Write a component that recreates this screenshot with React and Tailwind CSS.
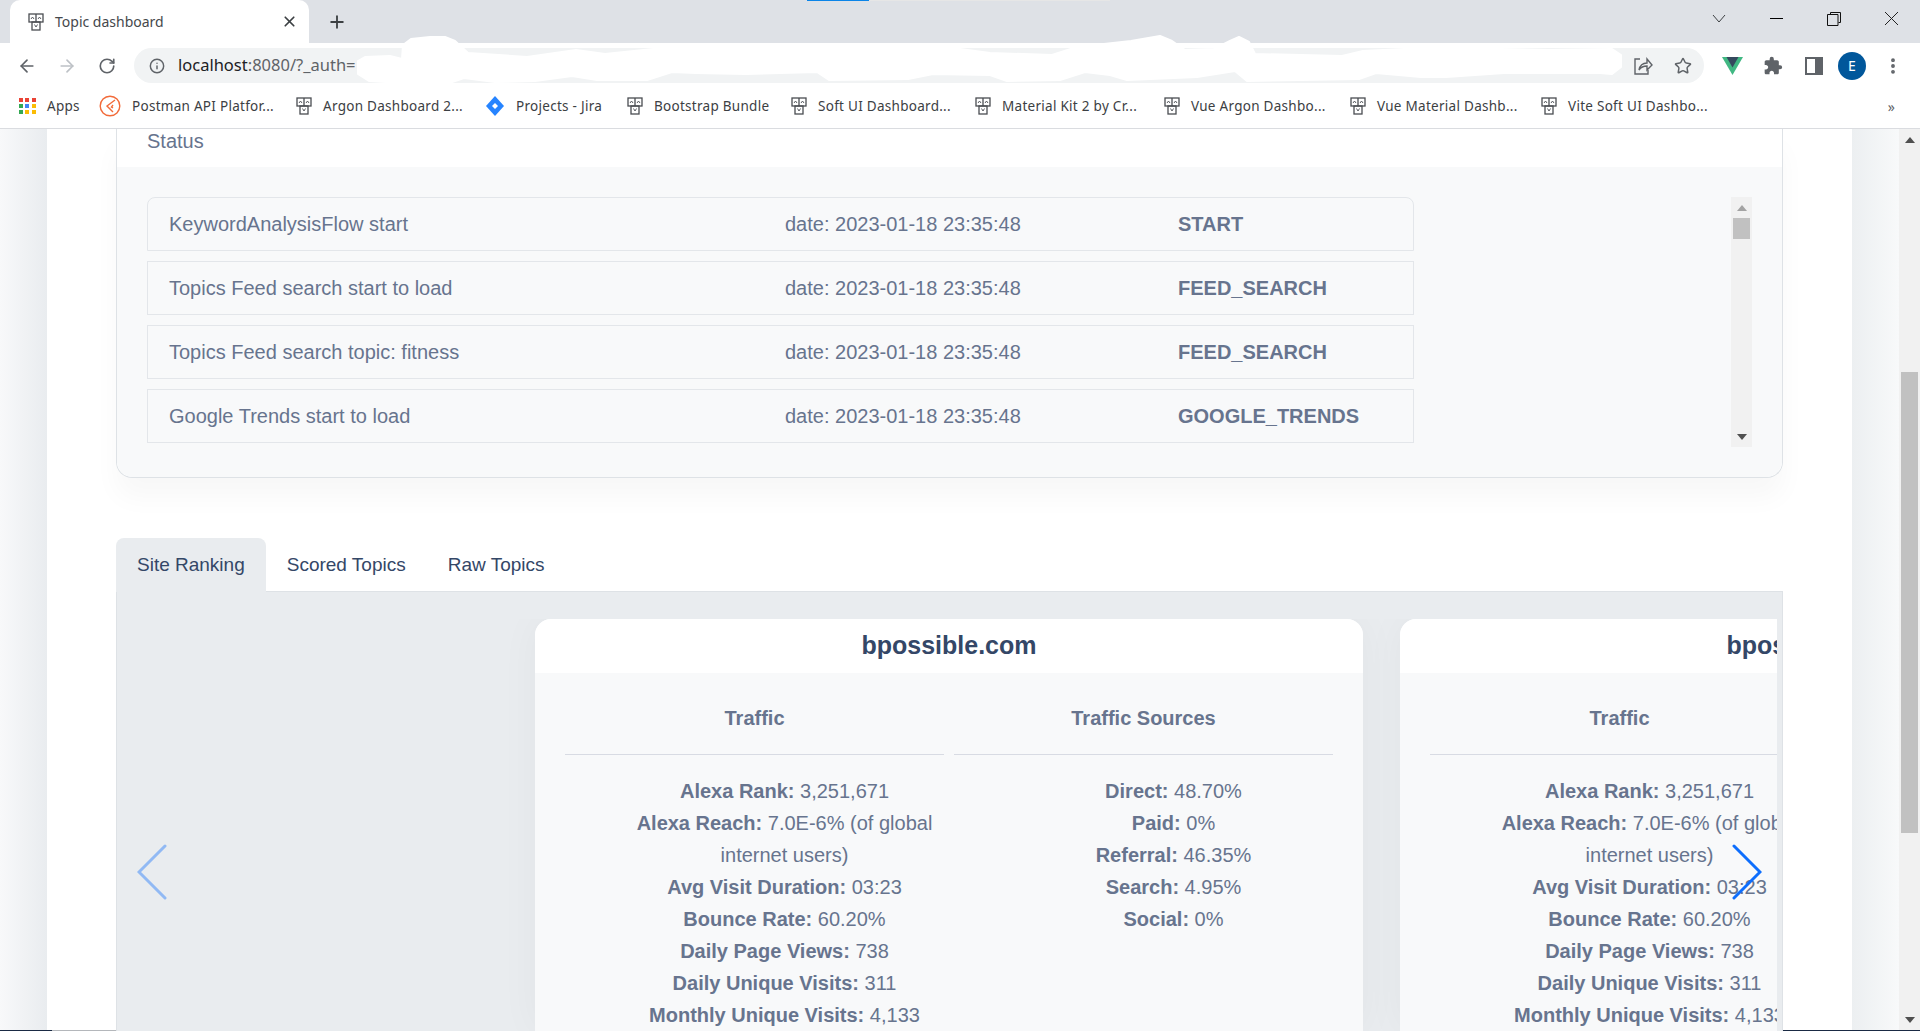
import { ArrowLeft, ArrowRight, RotateCw, Info, Star, X, Plus, EllipsisVertical } from 'lucide-react'
import { MdExtension } from 'react-icons/md'

const statusRows = [
  { text: 'KeywordAnalysisFlow start', tag: 'START', rounded: 'rounded-t-lg' },
  { text: 'Topics Feed search start to load', tag: 'FEED_SEARCH', rounded: '' },
  { text: 'Topics Feed search topic: fitness', tag: 'FEED_SEARCH', rounded: '' },
  { text: 'Google Trends start to load', tag: 'GOOGLE_TRENDS', rounded: '' },
]

const traffic = [
  ['Alexa Rank:', '3,251,671'],
  ['Alexa Reach:', '7.0E-6% (of global internet users)'],
  ['Avg Visit Duration:', '03:23'],
  ['Bounce Rate:', '60.20%'],
  ['Daily Page Views:', '738'],
  ['Daily Unique Visits:', '311'],
  ['Monthly Unique Visits:', '4,133'],
]

const sources = [
  ['Direct:', '48.70%'],
  ['Paid:', '0%'],
  ['Referral:', '46.35%'],
  ['Search:', '4.95%'],
  ['Social:', '0%'],
]

const bookmarks = [
  { label: 'Apps', icon: 'apps', width: 'w-[80px]' },
  { label: 'Postman API Platfor...', icon: 'postman', width: 'w-[197px]' },
  { label: 'Argon Dashboard 2...', icon: 'fav', width: 'w-[189px]' },
  { label: 'Projects - Jira', icon: 'jira', width: 'w-[142px]' },
  { label: 'Bootstrap Bundle', icon: 'fav', width: 'w-[164px]' },
  { label: 'Soft UI Dashboard...', icon: 'fav', width: 'w-[184px]' },
  { label: 'Material Kit 2 by Cr...', icon: 'fav', width: 'w-[189px]' },
  { label: 'Vue Argon Dashbo...', icon: 'fav', width: 'w-[186px]' },
  { label: 'Vue Material Dashb...', icon: 'fav', width: 'w-[191px]' },
  { label: 'Vite Soft UI Dashbo...', icon: 'fav', width: 'w-[170px]' },
]

function Favicon() {
  return (
    <svg width="16" height="18" viewBox="0 0 16 18" fill="none" stroke="#4a4d52" strokeWidth="1.3" className="shrink-0">
      <rect x="1" y="1" width="14" height="8" />
      <path d="M8 1v8" />
      <rect x="4" y="9" width="8" height="8" />
      <path d="M3 6l1.5-2L6 6M10 6l1.5-2L13 6M6.5 11.5L8 14l1.500-2.500" strokeWidth="0.9" />
    </svg>
  )
}

function AppsIcon() {
  const colors = ['bg-[#ea4335]', 'bg-[#ea4335]', 'bg-[#ea4335]', 'bg-[#34a853]', 'bg-[#4285f4]', 'bg-[#fbbc04]', 'bg-[#34a853]', 'bg-[#fbbc04]', 'bg-[#fbbc04]']
  return (
    <div className="grid grid-cols-3 gap-[2px] w-[17px] shrink-0">
      {colors.map((c, i) => (
        <span key={i} className={`h-[4px] w-[4px] ${c}`} />
      ))}
    </div>
  )
}

function PostmanIcon() {
  return (
    <svg width="22" height="22" viewBox="0 0 22 22" fill="none" stroke="#f26b3a" strokeWidth="1.4" className="shrink-0">
      <circle cx="11" cy="11" r="9.800" />
      <path d="M16 5l-8 6 6 6M14 10l-1.500 2 1.500 1" />
    </svg>
  )
}

function JiraIcon() {
  return (
    <svg width="20" height="22" viewBox="0 0 20 22" className="shrink-0">
      <path d="M10 1l9 10-9 10-9-10z" fill="#2684ff" />
      <path d="M10 8l3 3-3 3-3-3z" fill="#fff" />
    </svg>
  )
}

function BookmarkIcon({ type }) {
  if (type === 'apps') return <AppsIcon />
  if (type === 'postman') return <PostmanIcon />
  if (type === 'jira') return <JiraIcon />
  return <Favicon />
}

function TriangleUp({ color }) {
  return (
    <svg width="10" height="6" viewBox="0 0 10 6">
      <path d="M5 0l5 6H0z" fill={color} />
    </svg>
  )
}

function TriangleDown({ color }) {
  return (
    <svg width="10" height="6" viewBox="0 0 10 6">
      <path d="M0 0h10L5 6z" fill={color} />
    </svg>
  )
}

function TabStrip() {
  return (
    <div className="relative flex h-[43px] items-end bg-[#dee1e6] pl-[10px]">
      <div className="relative flex h-[43px] w-[299px] items-center rounded-t-[10px] bg-white pl-[18px] pr-[11px]">
        <Favicon />
        <span className="ml-[11px] flex-1 text-[14px] text-[#45484c]">Topic dashboard</span>
        <X size={17} strokeWidth={2.4} className="text-[#3c4043]" />
      </div>
      <Plus size={20} strokeWidth={2.2} className="ml-[18px] mb-[11px] text-[#3c4043]" />
      {/* page loading strip along the top edge */}
      <div className="absolute left-[807px] top-0 h-[1px] w-[62px] bg-[#0a84e8]" />
      <div className="absolute left-[869px] top-0 h-[1px] w-[241px] bg-[#e6e6e6]" />
      <svg width="16" height="10" viewBox="0 0 16 10" fill="none" stroke="#3c4043" className="absolute left-[1711px] top-[14px]">
        <path d="M2 1l6 7 6-7" />
      </svg>
      <div className="absolute left-[1770px] top-[18px] h-[1px] w-[13px] bg-black" />
      <svg width="14" height="14" viewBox="0 0 14 14" fill="none" stroke="#111" className="absolute left-[1827px] top-[12px]">
        <path d="M3.500 2.500V.5h10v10h-2M.5 2.500h10.500v11H.5z" />
      </svg>
      <svg width="15" height="15" viewBox="0 0 15 15" fill="none" stroke="#222" className="absolute left-[1884px] top-[11px]">
        <path d="M1 1l13 13M14 1L1 14" />
      </svg>
    </div>
  )
}

function Toolbar() {
  return (
    <div className="relative flex h-[42px] items-center bg-white pl-[17px] pt-[3px]">
      <ArrowLeft size={20} strokeWidth={2} className="text-[#5f6368]" />
      <ArrowRight size={20} strokeWidth={2} className="ml-[20px] text-[#bdc1c6]" />
      <RotateCw size={18} strokeWidth={2.2} className="ml-[21px] text-[#5f6368]" />
      <div className="ml-[18px] flex h-[35px] w-[1570px] items-center rounded-full bg-[#f1f3f4] pl-[15px]">
        <Info size={16} strokeWidth={2.2} className="text-[#5f6368]" />
        <span className="ml-[13px] text-[16.500px] text-[#202124]">
          localhost<span className="text-[#5f6368]">:8080/?_auth=</span>
        </span>
        <div className="ml-auto mr-[12px] flex items-center gap-[21px]">
          <svg width="20" height="20" viewBox="0 0 20 20" fill="none" stroke="#5f6368" strokeWidth="1.400">
            <path d="M7 3H2v15h13v-4" />
            <path d="M6 14c1-5 4-7 8-7V3l5 6-5 5v-4c-3 0-6 1-8 4z" />
          </svg>
          <Star size={18} strokeWidth={2} className="text-[#5f6368]" />
        </div>
      </div>
      <svg width="21" height="18" viewBox="0 0 21 18" className="ml-[18px]">
        <path d="M0 0h21L10.500 18z" fill="#41b883" />
        <path d="M4.500 0h12L10.500 10.500z" fill="#35495e" />
      </svg>
      <MdExtension size={20} className="ml-[20px] text-[#5f6368]" />
      <div className="ml-[22px] flex h-[18px] w-[18px] border-2 border-[#5f6368] bg-white">
        <span className="ml-auto h-full w-[6px] bg-[#5f6368]" />
      </div>
      <div className="ml-[15px] flex h-[28px] w-[28px] items-center justify-center rounded-full bg-[#01579b] text-[14px] text-white">E</div>
      <EllipsisVertical size={20} strokeWidth={2.6} className="ml-[17px] text-[#5f6368]" />
      {/* redacted part of the address, hand-painted white in the screenshot */}
      <svg width="1920" height="85" viewBox="0 -42 1920 85" className="absolute left-0 top-[-43px] pointer-events-none">
        <g transform="translate(0 -43)">
          <path
            fill="#fff"
            stroke="#fff"
            strokeLinejoin="round"
            strokeWidth="2"
            d="M358 75L358 62 365 58 390 57 402 60 403 46 411 40 430 38 445 38 455 42 468 54 527 58 576 51 605 55 663 49 738 50 813 48 920 48 960 50 990 54 1052 56 1077 48 1131 42 1160 37 1172 42 1185 51 1214 50 1230 42 1239 38 1249 43 1255 55 1342 57 1363 52 1405 50 1446 49 1550 51 1612 50 1621 56 1621 68 1612 75 1600 74 1504 74 1446 78 1421 78 1376 74 1359 80 1247 82 1235 72 1197 78 1127 81 1110 76 1085 73 1060 81 1007 82 990 76 933 75 908 80 829 81 817 73 746 75 696 74 672 73 647 81 597 81 572 77 535 82 495 83 464 79 452 83 386 83 369 82z"
          />
        </g>
      </svg>
    </div>
  )
}

function BookmarksBar() {
  return (
    <div className="flex h-[44px] items-center border-b border-[#dadce0] bg-white pl-[19px] pb-[1px]">
      {bookmarks.map((b) => (
        <div key={b.label} className={`flex items-center gap-[11px] ${b.width} shrink-0`}>
          <BookmarkIcon type={b.icon} />
          <span className="whitespace-nowrap text-[13.500px] tracking-[0.28px] text-[#3c4043]">{b.label}</span>
        </div>
      ))}
      <span className="ml-auto mr-[25px] text-[14px] text-[#5f6368]">»</span>
    </div>
  )
}

function StatusCard() {
  return (
    <div className="rounded-b-2xl border-x border-b border-[#dee2e6] shadow-[0_20px_27px_rgba(0,0,0,0.03)]">
      <div className="h-[38px] bg-white pl-[30px] text-[20px] leading-[24px] text-[#67748e]">Status</div>
      <div className="flex h-[310px] justify-between rounded-b-2xl bg-[#f8f9fa] px-[30px] pt-[30px]">
        <div className="h-[250px] w-[1267px] overflow-hidden">
          {statusRows.map((row) => (
            <div
              key={row.text}
              className={`mb-[10px] flex h-[54px] items-center border border-[#e3e6ea] pl-[21px] text-[20px] text-[#67748e] ${row.rounded}`}
            >
              <span className="w-[616px]">{row.text}</span>
              <span className="w-[393px]">date: 2023-01-18 23:35:48</span>
              <span className="font-bold">{row.tag}</span>
            </div>
          ))}
        </div>
        <div className="flex h-[250px] w-[21px] flex-col items-center bg-[#f1f1f1]">
          <div className="flex h-[21px] items-center justify-center">
            <TriangleUp color="#a3a3a3" />
          </div>
          <div className="h-[21px] w-[17px] bg-[#c1c1c1]" />
          <div className="mt-auto flex h-[21px] items-center justify-center">
            <TriangleDown color="#505050" />
          </div>
        </div>
      </div>
    </div>
  )
}

function InfoLine({ label, value }) {
  return (
    <li>
      <b className="font-bold">{label}</b> {value}
    </li>
  )
}

function SiteCard() {
  return (
    <div className="w-[828px] shrink-0 rounded-t-2xl bg-[#f8f9fa] shadow-[0_0_40px_rgba(0,0,0,0.04)]">
      <div className="flex h-[54px] items-center justify-center rounded-t-2xl bg-white text-[25px] font-bold text-[#344767]">
        bpossible.com
      </div>
      <div className="grid grid-cols-2 gap-[10px] px-[30px] pt-[30px] text-[20px] leading-[32px] text-[#67748e]">
        <div>
          <h5 className="border-b border-[#d8dbe3] pb-[21px] text-center text-[20px] leading-[30px] font-bold">Traffic</h5>
          <ul className="pl-[60px] pt-[20px] text-center">
            {traffic.map(([label, value]) => (
              <InfoLine key={label} label={label} value={value} />
            ))}
          </ul>
        </div>
        <div>
          <h5 className="border-b border-[#d8dbe3] pb-[21px] text-center text-[20px] leading-[30px] font-bold">Traffic Sources</h5>
          <ul className="pl-[60px] pt-[20px] text-center">
            {sources.map(([label, value]) => (
              <InfoLine key={label} label={label} value={value} />
            ))}
          </ul>
        </div>
      </div>
    </div>
  )
}

function RankingTabs() {
  return (
    <div className="mt-[60px]">
      <div className="flex h-[54px] border-b border-[#dee2e6] text-[19px] text-[#344767]">
        <div className="flex h-[54px] items-center rounded-t-lg bg-[#e9ecef] px-[21px]">Site Ranking</div>
        <div className="flex h-[54px] items-center px-[21px]">Scored Topics</div>
        <div className="flex h-[54px] items-center px-[21px]">Raw Topics</div>
      </div>
      <div className="relative h-[600px] border-x border-[#dee2e6] bg-[#e9ecef] pr-[5px] pt-[27px]">
        <div className="flex gap-[37px] overflow-hidden pl-[418px]">
          <SiteCard />
          <SiteCard />
        </div>
        <svg width="30" height="56" viewBox="0 0 30 56" fill="none" stroke="#0d6efd" strokeOpacity="0.4" strokeWidth="3" strokeLinecap="round" className="absolute left-[20px] top-[252px]">
          <path d="M28 2L2 28l26 26" />
        </svg>
        <svg width="30" height="56" viewBox="0 0 30 56" fill="none" stroke="#0d6efd" strokeWidth="3" strokeLinecap="round" className="absolute right-[20px] top-[252px]">
          <path d="M2 2l26 26L2 54" />
        </svg>
      </div>
    </div>
  )
}

export default function App() {
  return (
    <div className="flex h-[1031px] w-[1920px] flex-col overflow-hidden bg-white font-['Liberation_Sans',Arial,sans-serif]">
      <div className="font-['Noto_Sans',sans-serif]">
        <TabStrip />
        <Toolbar />
        <BookmarksBar />
      </div>

      <div className="flex min-h-0 flex-1">
        <div className="w-[47px] bg-gradient-to-r from-[#f8f9fa] to-[#e9ecef]" />
        <div className="w-[1805px] bg-white px-[69px]">
          <StatusCard />
          <RankingTabs />
        </div>
        <div className="w-[47px] bg-gradient-to-r from-[#eceff1] to-[#f8f9fa]" />
        <div className="flex w-[21px] flex-col items-center bg-[#f1f1f1]">
          <div className="flex h-[21px] items-center justify-center">
            <TriangleUp color="#505050" />
          </div>
          <div className="mt-[222px] h-[461px] w-[17px] bg-[#c1c1c1]" />
          <div className="mt-auto flex h-[21px] items-center justify-center">
            <TriangleDown color="#505050" />
          </div>
        </div>
      </div>

      {/* edge of the taskbar peeking under the window */}
      <div className="flex h-[1px] shrink-0">
        <div className="w-[52px] bg-[#1a2a44]" />
        <div className="w-[438px] bg-[#b4b7bb]" />
        <div className="flex-1 bg-[#1a2a44]" />
      </div>
    </div>
  )
}
